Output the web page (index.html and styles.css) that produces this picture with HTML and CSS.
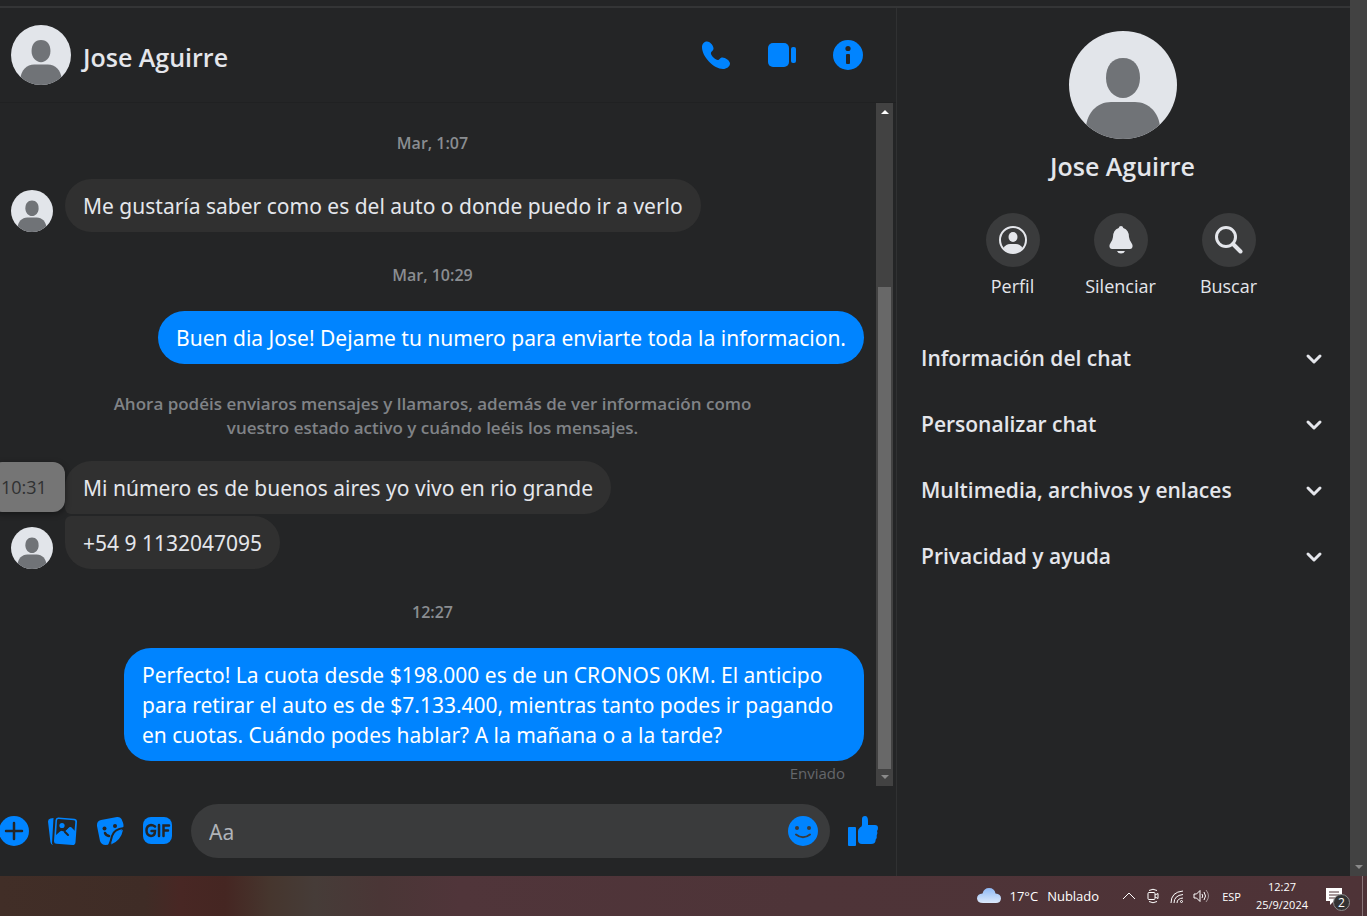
FILE: index.html
```html
<!DOCTYPE html>
<html lang="es">
<head>
<meta charset="UTF-8">
<meta name="viewport" content="width=device-width, initial-scale=1.0">
<title>Messenger</title>
<link rel="stylesheet" href="styles.css">
</head>
<body>
    <!-- shared avatar drawing -->
    <svg class="defs" width="0" height="0" aria-hidden="true">
        <defs>
            <clipPath id="round"><circle cx="54" cy="54" r="54"/></clipPath>
            <symbol id="avatar" viewBox="0 0 108 108">
                <g clip-path="url(#round)">
                    <rect width="108" height="108" fill="#e2e5ea"/>
                    <path d="M54 27c11 0 17 8 17 20s-8 20-17 20-17-8-17-20 6-20 17-20z" fill="#707377"/>
                    <path d="M17 96c1-14 11-25 25-25h24c14 0 24 11 25 25v12H17z" fill="#707377"/>
                </g>
            </symbol>
            <symbol id="chevron" viewBox="0 0 20 20">
                <path d="M4 8l6 6 6-6" fill="none" stroke="#e4e6eb" stroke-width="3" stroke-linecap="round" stroke-linejoin="round"/>
            </symbol>
        </defs>
    </svg>

    <div class="window">
        <div class="page">
            <div class="top-strip"></div>
            <div class="app">
                <main class="chat">
                    <header class="chat-header">
                        <svg class="avatar-medium"><use href="#avatar"/></svg>
                        <h1>Jose Aguirre</h1>
                        <button class="icon-button" aria-label="Llamar">
                            <svg viewBox="0 0 30 30"><path d="M1 7c0-3 2-5.500 5-5.500 3.500 0 7 5 6.500 7.500-.4 2-2.600 2.500-2.600 4.200 0 2.500 4.600 6.800 7 6.800 1.700 0 2-2.500 4.500-2.500 3 0 7.600 3.200 7.600 6 0 3-3.500 5.500-7 5.500C13 29 1 17 1 7z"/></svg>
                        </button>
                        <button class="icon-button" aria-label="Videollamada">
                            <svg viewBox="0 0 30 30"><rect x="1" y="3" width="21" height="24" rx="5"/><rect x="24" y="7" width="5" height="16" rx="2"/></svg>
                        </button>
                        <button class="icon-button" aria-label="Información">
                            <svg viewBox="0 0 30 30"><circle cx="15" cy="15" r="15"/><circle cx="15" cy="8.500" r="2.600" fill="#242526"/><rect x="13" y="14" width="4" height="10" rx="1" fill="#242526"/></svg>
                        </button>
                    </header>

                    <div class="messages-wrap">
                        <div class="messages">
                            <time class="divider first">Mar, 1:07</time>
                            <div class="row">
                                <svg class="avatar-small"><use href="#avatar"/></svg>
                                <p class="bubble">Me gustaría saber como es del auto o donde puedo ir a verlo</p>
                            </div>
                            <time class="divider">Mar, 10:29</time>
                            <div class="row own">
                                <p class="bubble">Buen dia Jose! Dejame tu numero para enviarte toda la informacion.</p>
                            </div>
                            <p class="notice">Ahora podéis enviaros mensajes y llamaros, además de ver información como vuestro estado activo y cuándo leéis los mensajes.</p>
                            <div class="row">
                                <span class="time-tip">10:31</span>
                                <span class="avatar-space"></span>
                                <p class="bubble group-first">Mi número es de buenos aires yo vivo en rio grande</p>
                            </div>
                            <div class="row next">
                                <svg class="avatar-small"><use href="#avatar"/></svg>
                                <p class="bubble group-last">+54 9 1132047095</p>
                            </div>
                            <time class="divider">12:27</time>
                            <div class="row own">
                                <p class="bubble">Perfecto! La cuota desde $198.000 es de un CRONOS 0KM. El anticipo para retirar el auto es de $7.133.400, mientras tanto podes ir pagando en cuotas. Cuándo podes hablar? A la mañana o a la tarde?</p>
                            </div>
                            <p class="status">Enviado</p>
                        </div>
                        <div class="scrollbar">
                            <span class="arrow up"></span>
                            <span class="thumb"></span>
                            <span class="arrow down"></span>
                        </div>
                    </div>

                    <form class="composer">
                        <button type="button" class="icon-button" aria-label="Más acciones">
                            <svg viewBox="0 0 30 30"><circle cx="15" cy="15" r="15"/><path d="M15 7v16M7 15h16" class="cut"/></svg>
                        </button>
                        <button type="button" class="icon-button" aria-label="Adjuntar foto">
                            <svg viewBox="0 0 30 30">
                                <g transform="translate(1 0)">
                                    <path d="M0 5.500Q0 3 2.500 2.500L5.500 2 4 27.500 5 29Q2.600 28.500 2.400 26z"/>
                                    <path d="M10.500 1.500l16 1.200q2.700.3 2.500 3l-1.500 20.500q-.3 3-3 2.800L8.500 27.800q-2.700-.2-2.500-3L7.500 4q.3-2.700 3-2.500z"/>
                                    <path d="M9 4.500q.2-1.500 1.700-1.400L26 4.300q1.400.2 1.300 1.600l-.8 9-3.500-3.400q-1-.8-2 .1l-4 4.500-3.500-1.400L8 20z" fill="#242526"/>
                                    <circle cx="14" cy="9.500" r="2.600"/>
                                    <path d="M8 19l4-3.400q1-.6 1.800.2l4.200 4.500-1.500-4.500 5-4.300q1-.8 2 .1l3 3-.5 8H8z"/>
                                    <path d="M17 16l3 3" class="cut thin"/>
                                </g>
                            </svg>
                        </button>
                        <button type="button" class="icon-button" aria-label="Elegir sticker">
                            <svg viewBox="0 0 30 30">
                                <path d="M6 4L22 1q3-.4 4.500 2l1.600 4q1.300 4-1.300 7L18 25q-2.500 4-7.500 4-4 0-5.500-4L2 10Q1.500 5 6 4z"/>
                                <path d="M29 12q-10 1-12 8-1 5-3 9.500" class="cut thin"/>
                                <circle cx="9.500" cy="12.500" r="2" fill="#242526"/><circle cx="20" cy="10" r="2" fill="#242526"/>
                                <path d="M10 17q1 2.500 4 3" class="cut"/>
                                <path d="M28 14q-8 1.500-9.500 7-1 4-2.500 7.500 10-4 12-14.500z"/>
                            </svg>
                        </button>
                        <button type="button" class="icon-button" aria-label="Elegir GIF">
                            <svg viewBox="0 0 30 30">
                                <rect width="29" height="27" y="1" rx="8"/>
                                <path d="M12 10.500Q10 9 8 9q-4.500.5-4.500 5.500T8 20q4 0 4-5H8.500M16 9v11M20.500 20V9.500H26M20.500 14.500H25" class="cut"/>
                            </svg>
                        </button>
                        <div class="text-field">
                            <input type="text" placeholder="Aa" aria-label="Mensaje">
                            <button type="button" class="icon-button" aria-label="Elegir emoji">
                                <svg viewBox="0 0 30 30"><circle cx="15" cy="15" r="15"/><circle cx="9" cy="12" r="2" fill="#3a3b3c"/><circle cx="21" cy="12" r="2" fill="#3a3b3c"/><path d="M8 18.500q7 5.500 14 0" fill="none" stroke="#3a3b3c" stroke-width="2" stroke-linecap="round"/></svg>
                            </button>
                        </div>
                        <button type="button" class="icon-button" aria-label="Enviar me gusta">
                            <svg viewBox="0 0 30 30"><rect y="11" width="8" height="19" rx="1"/><path d="M14 9V3q0-3 3-3 3 0 3 5v4h7q3 0 3 3 0 2-1 3 1 2-.3 4.500.5 2-1 4 0 4.500-4.700 4.500H14q-4 0-4-4V15q0-2 2-3.500 2-1 2-2.500z"/></svg>
                        </button>
                    </form>
                </main>

                <aside class="details">
                    <svg class="avatar-large"><use href="#avatar"/></svg>
                    <h2>Jose Aguirre</h2>
                    <div class="actions">
                        <button class="action">
                            <span class="disc"><svg viewBox="0 0 28 28"><circle cx="14" cy="14" r="13" fill="none" stroke="#e4e6eb" stroke-width="2"/><ellipse cx="14" cy="11" rx="4.500" ry="5"/><path d="M4.500 22Q7 18 11 18h6q4 0 6.500 4-4 5-9.500 5t-9.500-5z"/></svg></span>
                            Perfil
                        </button>
                        <button class="action">
                            <span class="disc"><svg viewBox="0 0 28 28"><path d="M14 0q2 0 2.300 2Q22 4 22 11q.3 3 2.500 6 1.500 2 1 4-.5 2-2.500 2H5q-2 0-2.500-2-.5-2 1-4Q5.700 14 6 11q0-7 5.700-9Q12 0 14 0zM10 25h8q-1 2.500-4 2.500T10 25z"/></svg></span>
                            Silenciar
                        </button>
                        <button class="action">
                            <span class="disc"><svg viewBox="0 0 28 28"><g fill="none" stroke="#e4e6eb" stroke-linecap="round"><circle cx="11" cy="11" r="9.500" stroke-width="3"/><path d="M18 18l7.500 7.500" stroke-width="4"/></g></svg></span>
                            Buscar
                        </button>
                    </div>
                    <div class="sections">
                        <button>Información del chat <svg><use href="#chevron"/></svg></button>
                        <button>Personalizar chat <svg><use href="#chevron"/></svg></button>
                        <button>Multimedia, archivos y enlaces <svg><use href="#chevron"/></svg></button>
                        <button>Privacidad y ayuda <svg><use href="#chevron"/></svg></button>
                    </div>
                </aside>
            </div>
        </div>
        <div class="page-scrollbar"><span class="arrow down"></span></div>
    </div>

    <footer class="taskbar">
        <button class="weather">
            <svg width="24" height="18" viewBox="0 0 24 18">
                <defs><linearGradient id="cloud" x1="0" y1="0" x2="0" y2="1"><stop offset="0" stop-color="#8fb9f5"/><stop offset="1" stop-color="#dce9fb"/></linearGradient></defs>
                <path d="M6 16q-5.500 0-6-4.500Q0 7 5.500 6.500 7 1 12 1q5.500 0 6.500 5.500Q24 7 24 11.500q-.5 4.500-5 4.500z" fill="url(#cloud)"/>
            </svg>
            <span>17°C</span><span>Nublado</span>
        </button>
        <div class="tray">
            <svg viewBox="0 0 16 16"><path d="M2 11l6-6 6 6"/></svg>
            <svg viewBox="0 0 16 16"><path d="M4 2.500q4-2.500 8 0M4 13.500q4 2.500 8 0"/><rect x="3" y="4.500" width="7" height="7" rx="1"/><path d="M10 7l3-1.500v5L10 9"/></svg>
            <svg viewBox="0 0 16 16"><path d="M2 15Q2 4 14 3M5 15Q5 7.500 14 6.500M8 15Q8 10.500 14 10"/><circle cx="12.500" cy="13.500" r="1"/></svg>
            <svg viewBox="0 0 16 16"><path d="M1 6h2.500L7 2.500v11L3.500 10H1zM9 6q1.500 2 0 4M11 4q3 4 0 8"/><path d="M13 2q5 6 0 12" opacity=".5"/></svg>
        </div>
        <span class="language">ESP</span>
        <div class="clock"><time>12:27</time><span>25/9/2024</span></div>
        <button class="notifications" aria-label="Notificaciones">
            <svg width="18" height="18" viewBox="0 0 18 18"><path d="M0 0h16v13H8l-4 4v-4H0z" fill="#fff"/><path d="M3 4h10M3 7h10M3 10h7" stroke="#4e3237"/></svg>
            <span class="badge">2</span>
        </button>
    </footer>
</body>
</html>
```
FILE: styles.css
```css
* {
    box-sizing: border-box;
}

body {
    margin: 0;
    height: 100vh;
    display: flex;
    flex-direction: column;
    overflow: hidden;
    background-color: #242526;
    color: #e4e6eb;
    font-family: "Open Sans", "Noto Sans", sans-serif;
    font-size: 21px;
}

h1, h2, p {
    margin: 0;
}

button {
    margin: 0;
    padding: 0;
    border: none;
    background: none;
    color: inherit;
    font: inherit;
}

.defs {
    position: absolute;
}

.window {
    flex: 1;
    min-height: 0;
    display: flex;
}

.page {
    flex: 1;
    min-width: 0;
    display: flex;
    flex-direction: column;
}

.top-strip {
    height: 8px;
    border-bottom: 2px solid #343536;
}

.app {
    flex: 1;
    min-height: 0;
    display: flex;
}

/* chat column */
.chat {
    flex: 1;
    min-width: 0;
    display: flex;
    flex-direction: column;
    border-right: 1px solid #303132;
}

.chat-header {
    height: 95px;
    padding: 0 33px 0 11px;
    display: flex;
    align-items: center;
    gap: 36px;
    border-bottom: 1px solid #202122;
}

.chat-header h1 {
    flex: 1;
    margin-left: -24px;
    padding-top: 4px;
}

h1, h2 {
    font-size: 25px;
    line-height: 30px;
    font-weight: 600;
}

.avatar-large {
    width: 108px;
    height: 108px;
}

.avatar-medium {
    width: 60px;
    height: 60px;
}

.avatar-small {
    width: 42px;
    height: 42px;
    flex: none;
}

.icon-button {
    width: 30px;
    height: 30px;
    flex: none;
}

.icon-button svg {
    display: block;
    width: 30px;
    height: 30px;
    fill: #0084ff;
}

.icon-button .cut {
    fill: none;
    stroke: #242526;
    stroke-width: 2.5;
    stroke-linecap: round;
}

.icon-button .thin {
    stroke-width: 2;
}

.messages-wrap {
    flex: 1;
    min-height: 0;
    display: flex;
    padding-right: 3px;
}

.messages {
    flex: 1;
    min-width: 0;
    overflow: hidden;
    padding: 0 12px 0 11px;
}

.divider {
    display: block;
    margin: 31px 0 24px;
    padding-right: 10px;
    font-size: 16px;
    line-height: 24px;
    font-weight: 600;
    text-align: center;
    color: #8a8d91;
}

.divider.first {
    margin-top: 28px;
}

.row {
    position: relative;
    display: flex;
    align-items: flex-end;
    gap: 12px;
}

.row.next {
    margin-top: 2px;
}

.row.own {
    justify-content: flex-end;
}

.bubble {
    max-width: 740px;
    padding: 12px 18px 11px;
    border-radius: 27px;
    background-color: #303030;
    font-family: "Noto Sans", "Open Sans", sans-serif;
    line-height: 30px;
}

.own .bubble {
    background-color: #0084ff;
    color: #fff;
}

.group-first {
    border-bottom-left-radius: 6px;
}

.group-last {
    border-top-left-radius: 6px;
}

.avatar-space {
    width: 42px;
}

.time-tip {
    position: absolute;
    left: -21px;
    top: 1px;
    width: 75px;
    padding-left: 11px;
    border-radius: 12px;
    background-color: #757575;
    color: #303132;
    font-size: 18px;
    line-height: 50px;
    box-shadow: 0 2px 6px rgba(0, 0, 0, 0.4);
}

.notice {
    max-width: 670px;
    margin: 28px auto 21px;
    padding-right: 10px;
    font-size: 17px;
    line-height: 24px;
    font-weight: 600;
    text-align: center;
    color: #808387;
}

.status {
    padding-right: 19px;
    font-size: 15px;
    line-height: 24px;
    text-align: right;
    color: #65676b;
}

/* scrollbars */
.scrollbar, .page-scrollbar {
    width: 17px;
    display: flex;
    flex-direction: column;
    align-items: center;
    background-color: #424242;
}

.scrollbar {
    justify-content: space-between;
    padding: 7px 0;
}

.page-scrollbar {
    justify-content: flex-end;
    padding-bottom: 7px;
}

.thumb {
    width: 13px;
    height: 482px;
    margin-top: auto;
    margin-bottom: 6px;
    background-color: #686868;
}

.arrow {
    border: 4px solid transparent;
}

.arrow.up {
    border-top: 0;
    border-bottom-color: #fff;
}

.arrow.down {
    border-bottom: 0;
    border-top-color: #8a8a8a;
}

/* composer */
.composer {
    height: 90px;
    margin-left: -1px;
    padding-right: 18px;
    display: flex;
    align-items: center;
    gap: 18px;
}

.text-field {
    flex: 1;
    height: 54px;
    padding: 0 12px 0 18px;
    display: flex;
    align-items: center;
    border-radius: 27px;
    background-color: #3a3b3c;
}

.text-field input {
    flex: 1;
    min-width: 0;
    padding: 2px 0 0;
    border: none;
    outline: none;
    background: none;
    color: #e4e6eb;
    font: inherit;
    font-family: "Noto Sans", "Open Sans", sans-serif;
}

.text-field input::placeholder {
    color: #b0b3b8;
}

/* right panel */
.details {
    width: 453px;
    padding-top: 23px;
    padding-right: 2px;
    display: flex;
    flex-direction: column;
    align-items: center;
}

.details h2 {
    margin-top: 12px;
}

.actions {
    display: flex;
    margin-top: 32px;
    padding-right: 4px;
}

.action {
    width: 108px;
    display: flex;
    flex-direction: column;
    align-items: center;
    gap: 7px;
    font-size: 18px;
    line-height: 24px;
}

.disc {
    width: 54px;
    height: 54px;
    display: flex;
    align-items: center;
    justify-content: center;
    border-radius: 50%;
    background-color: #3a3b3c;
}

.disc svg {
    width: 28px;
    height: 28px;
    fill: #e4e6eb;
}

.sections {
    align-self: stretch;
    margin-top: 27px;
    padding: 0 24px;
}

.sections button {
    width: 100%;
    height: 66px;
    display: flex;
    align-items: center;
    justify-content: space-between;
    font-weight: 600;
}

.sections svg {
    width: 20px;
    height: 20px;
}

/* windows taskbar */
.taskbar {
    height: 40px;
    padding-right: 4px;
    display: flex;
    align-items: center;
    justify-content: flex-end;
    background: linear-gradient(to right, #412e27 0, #3f2c26 145px, #482724 180px, #452622 225px, #46362e 270px, #463c38 315px, #4a3636 380px, #50353a 460px, #4e3438 800px, #4e3337 100%);
    color: #fff;
    font-size: 13px;
}

.weather {
    display: flex;
    align-items: center;
    gap: 9px;
    margin-right: 22px;
}

.tray {
    display: flex;
    gap: 8px;
}

.tray svg {
    width: 16px;
    height: 16px;
    fill: none;
    stroke: #fff;
}

.language {
    margin: 0 15px 0 13px;
    font-size: 11px;
}

.clock {
    display: flex;
    flex-direction: column;
    align-items: center;
    font-size: 11px;
    line-height: 18px;
}

.notifications {
    position: relative;
    width: 37px;
    height: 40px;
    margin-left: 18px;
    padding-top: 2px;
    border-right: 1px solid #8a777a;
    text-align: left;
}

.notifications svg {
    display: block;
}

.badge {
    position: absolute;
    left: 7px;
    top: 18px;
    width: 17px;
    height: 17px;
    border: 1px solid #8c8c8c;
    border-radius: 50%;
    background-color: #333;
    font-size: 12px;
    line-height: 15px;
    text-align: center;
}
```
